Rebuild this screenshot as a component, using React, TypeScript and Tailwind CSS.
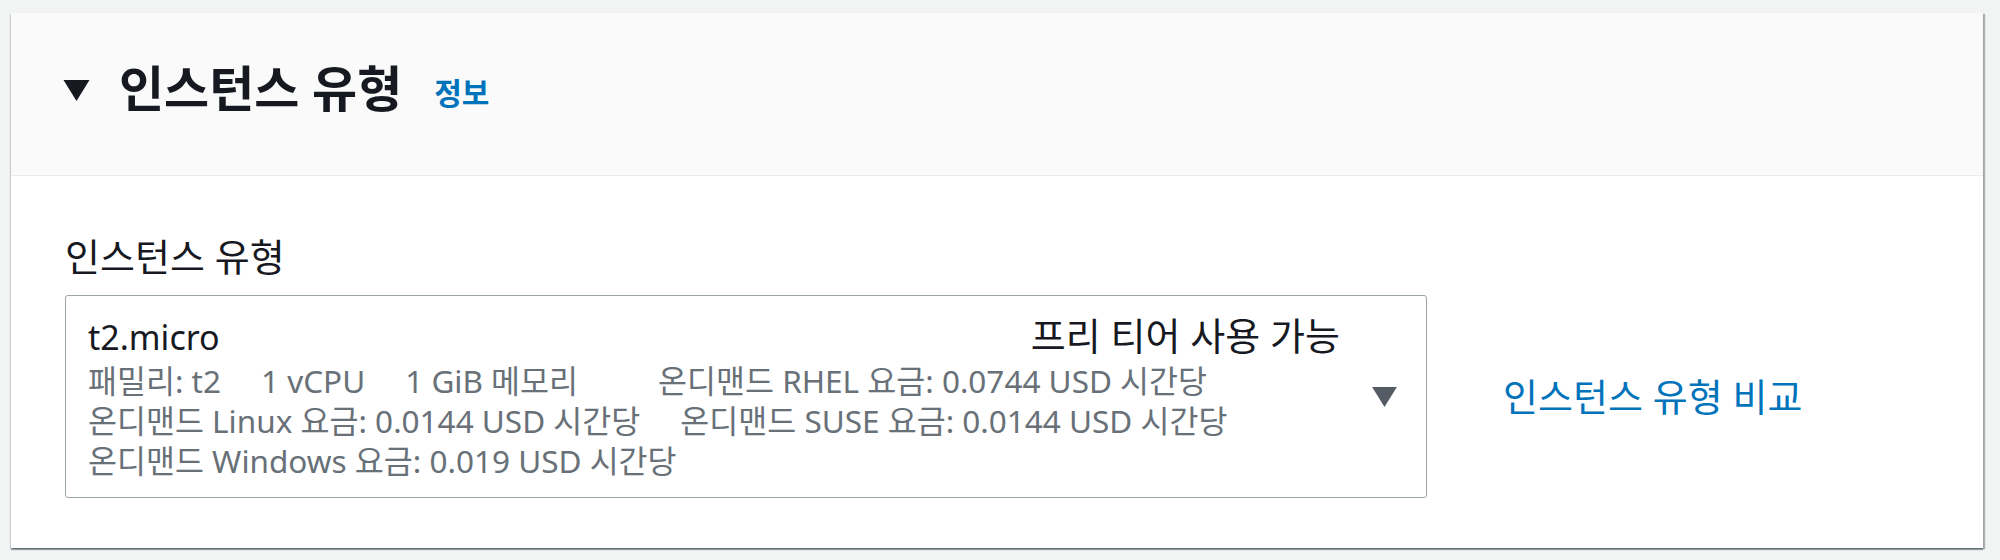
const details = [
  "패밀리: t2",
  "1 vCPU",
  "1 GiB 메모리",
  "",
  "온디맨드 RHEL 요금: 0.0744 USD 시간당",
  "온디맨드 Linux 요금: 0.0144 USD 시간당",
  "온디맨드 SUSE 요금: 0.0144 USD 시간당",
  "온디맨드 Windows 요금: 0.019 USD 시간당",
];

const Caret = ({ className }: { className: string }) => (
  <svg viewBox="0 0 26 21" className={className} fill="currentColor">
    <path d="M0 0 H26 L13 21 Z" />
  </svg>
);

export default function App() {
  return (
    <div className="min-h-[560px] bg-[#f2f3f3] pt-[13px] pl-[11px] pr-[17px] font-['Noto_Sans','Noto_Sans_CJK_KR',sans-serif] text-[#16191f]">
      <section className="bg-white shadow-[0_2px_1px_0_rgba(0,28,36,0.35),2px_1px_1px_0_rgba(0,28,36,0.3),-1px_1px_1px_0_rgba(0,28,36,0.12)]">
        <header className="h-[163px] bg-[#fafafa] border-b border-[#eaeded] flex items-center pl-[52px] pb-[12px]">
          <Caret className="w-[27px] h-[21px] text-[#16191f] mt-[4px]" />
          <h2 className="ml-[29px] text-[49px] font-bold leading-none">인스턴스 유형</h2>
          <a className="ml-[32px] mt-[8px] text-[30px] font-bold text-[#0073bb]">정보</a>
        </header>

        <div className="pt-[56px] pl-[54px] pb-[50px]">
          <label className="block text-[38px] leading-[48px]">인스턴스 유형</label>

          <div className="mt-[15px] flex items-center">
            <div className="w-[1362px] border border-[#9aa5a6] rounded-[3px] flex items-center pl-[22px] pr-[29px] pt-[16px] pb-[16px]">
              <div className="flex-1">
                <div className="flex justify-between items-baseline leading-[46px] pr-[2px]">
                  <span className="text-[34px]">t2.micro</span>
                  <span className="text-[38px]">프리 티어 사용 가능</span>
                </div>
                <div className="mt-[1px] flex flex-wrap gap-x-[40px] text-[31.5px] leading-[40px] text-[#687078]">
                  {details.map((d, i) => (
                    <span key={i}>{d}</span>
                  ))}
                </div>
              </div>
              <Caret className="ml-[30px] w-[25px] h-[20px] text-[#545b64]" />
            </div>

            <a className="ml-[76px] text-[38px] text-[#0073bb]">인스턴스 유형 비교</a>
          </div>
        </div>
      </section>
    </div>
  );
}
